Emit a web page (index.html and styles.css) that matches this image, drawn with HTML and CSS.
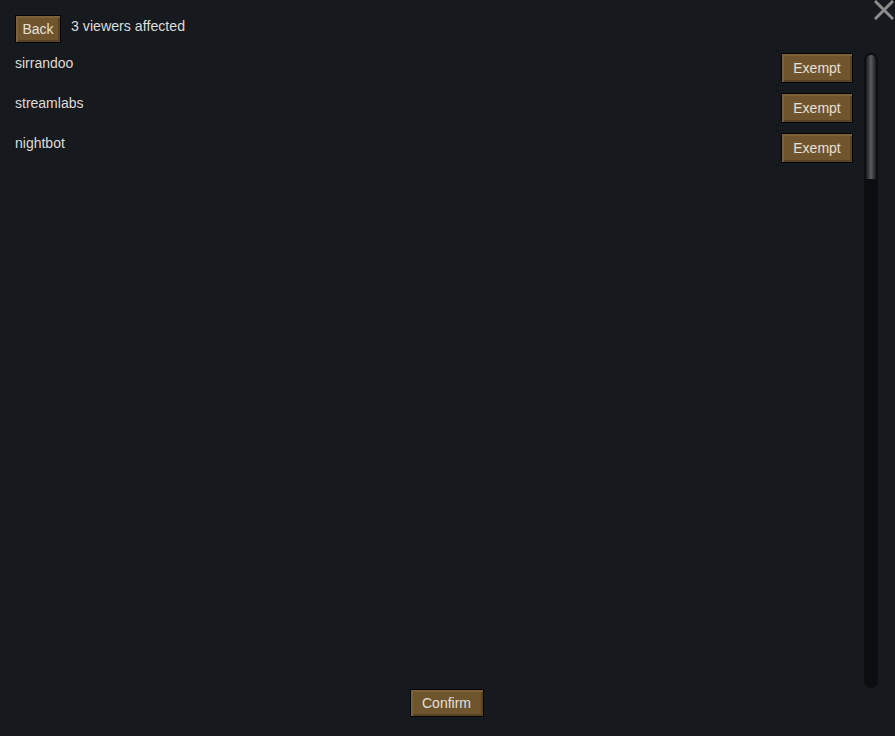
FILE: index.html
```html
<!DOCTYPE html>
<html>
<head>
<meta charset="utf-8">
<link rel="stylesheet" href="styles.css">
</head>
<body>
<div class="window">
  <div class="close" aria-label="Close">
    <svg width="20" height="20" viewBox="0 0 20 20"><path d="M2 2 L18 18 M18 2 L2 18" stroke="#8c8c8c" stroke-width="3" stroke-linecap="square"/></svg>
  </div>
  <div class="header">
    <button class="btn btn-back">Back</button>
    <span class="count">3 viewers affected</span>
  </div>
  <div class="main">
    <div class="list">
      <div class="row"><span class="name">sirrandoo</span><button class="btn btn-exempt">Exempt</button></div>
      <div class="row"><span class="name">streamlabs</span><button class="btn btn-exempt">Exempt</button></div>
      <div class="row"><span class="name">nightbot</span><button class="btn btn-exempt">Exempt</button></div>
    </div>
    <div class="scrollbar"><div class="thumb"></div></div>
  </div>
  <div class="footer">
    <button class="btn btn-confirm">Confirm</button>
  </div>
</div>
</body>
</html>
```
FILE: styles.css
```css
html, body {
  margin: 0;
  padding: 0;
  background: #16191d;
}
body {
  font-family: "Liberation Sans", Arial, sans-serif;
  font-size: 14px;
  color: #dcdcdc;
}
.window {
  position: relative;
  box-sizing: border-box;
  width: 895px;
  height: 736px;
  padding: 15px 17px 19px 15px;
  display: flex;
  flex-direction: column;
}
.close {
  position: absolute;
  top: 0;
  right: 1px;
  width: 20px;
  height: 20px;
}
.close svg { display: block; }
.header {
  display: flex;
  align-items: flex-start;
  height: 28px;
  gap: 10px;
}
.count {
  margin-top: 3px;
  line-height: 17px;
  font-size: 14.2px;
}
.btn {
  box-sizing: border-box;
  font-family: "Liberation Sans", Arial, sans-serif;
  font-size: 14px;
  color: #e6e0d6;
  background: #6f552e;
  border: 1px solid #050505;
  box-shadow: inset 2px 2px 0 #7c623a, inset -2px -2px 0 #574223;
  padding: 0;
  margin: 0;
  cursor: pointer;
}
.btn-back {
  width: 46px;
  height: 28px;
}
.main {
  flex: 1;
  display: flex;
  margin-top: 10px;
  min-height: 0;
}
.list {
  flex: 1;
  display: flex;
  flex-direction: column;
  gap: 10px;
  margin-right: 11px;
}
.row {
  display: flex;
  justify-content: space-between;
  align-items: flex-start;
  height: 30px;
}
.name {
  line-height: 17px;
  margin-top: 2px;
}
.btn-exempt {
  width: 72px;
  height: 30px;
}
.scrollbar {
  width: 14px;
  background: #0c0e11;
  border-radius: 7px;
  padding: 2px;
  box-sizing: border-box;
}
.thumb {
  height: 124px;
  border-radius: 5px 5px 0 0;
  background: linear-gradient(to right, #1a1b1d 0%, #333436 20%, #5c5d5f 50%, #333436 80%, #1a1b1d 100%);
}
.footer {
  display: flex;
  justify-content: center;
  padding-top: 1px;
}
.btn-confirm {
  width: 74px;
  height: 28px;
}
```
